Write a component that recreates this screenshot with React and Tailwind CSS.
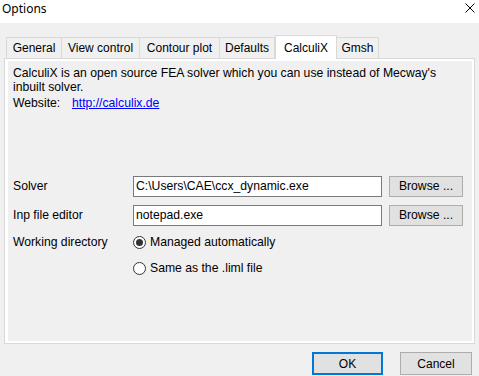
import React from "react";

function Tab({ label, w, selected, first }) {
  if (selected) {
    return (
      <div
        className="relative z-10 -mb-px flex h-[24px] items-start justify-center border border-b-0 border-[#d9d9d9] bg-white pt-[3px]"
        style={{ width: w }}
      >
        {label}
      </div>
    );
  }
  return (
    <div
      className={
        "flex h-[21px] items-center justify-center border-r border-t border-[#d9d9d9] bg-[#f0f0f0] " +
        (first ? "border-l" : "")
      }
      style={{ width: w }}
    >
      {label}
    </div>
  );
}

function Radio({ checked, label }) {
  return (
    <div className="flex h-[16px] items-center">
      <div className="flex h-[13px] w-[13px] items-center justify-center rounded-full border border-[#333333] bg-white">
        {checked && <div className="h-[7px] w-[7px] rounded-full bg-[#333333]" />}
      </div>
      <span className="ml-[4px]">{label}</span>
    </div>
  );
}

export default function App() {
  return (
    <div
      className="relative h-[376px] w-[479px] overflow-hidden bg-[#f0f0f0] text-[12px] text-black"
      style={{ fontFamily: '"Liberation Sans", Arial, sans-serif' }}
    >
      {/* Title bar */}
      <div className="flex h-[23px] items-center justify-between bg-white pl-[2px] pr-[3px]">
        <span
          className="pb-[5px] text-[12px]"
          style={{ fontFamily: '"Segoe UI", "Noto Sans", sans-serif' }}
        >
          Options
        </span>
        <svg width="10" height="10" viewBox="0 0 10 10" className="mb-[7px] mr-[1px]">
          <path d="M0.5 0.5 L9.5 9.5 M9.5 0.5 L0.5 9.5" stroke="#000" strokeWidth="1" fill="none" />
        </svg>
      </div>

      {/* Tab control */}
      <div className="ml-[4px] mt-[12px] w-[471px]">
        <div className="flex h-[23px] items-end pl-[2px]">
          <Tab label="General" w={56} first />
          <Tab label="View control" w={78} />
          <Tab label="Contour plot" w={80} />
          <Tab label="Defaults" w={55} />
          <Tab label="CalculiX" w={62} selected />
          <Tab label="Gmsh" w={42} />
        </div>
        <div className="h-[286px] border border-[#d9d9d9] bg-white pb-[2px] pl-[3px] pr-[2px] pt-[2px]">
          <div className="flex h-full flex-col bg-[#f0f0f0] pl-[5px] pt-[5px] text-[12.2px]">
            <p className="leading-[14px]">
              CalculiX is an open source FEA solver which you can use instead of Mecway's
              <br />
              inbuilt solver.
            </p>
            <div className="mt-[2px] flex leading-[14px]">
              <span className="w-[59px]">Website:</span>
              <span className="text-[#0000ff] underline">http://calculix.de</span>
            </div>

            <div className="mt-[66px] flex h-[21px] items-center">
              <span className="w-[120px]">Solver</span>
              <div className="flex h-[21px] w-[249px] items-center border border-[#7a7a7a] bg-white pl-[2px]">
                C:\Users\CAE\ccx_dynamic.exe
              </div>
              <div className="ml-[7px] flex h-[21px] w-[74px] items-center justify-center border border-[#adadad] bg-[#e1e1e1]">
                Browse ...
              </div>
            </div>

            <div className="mt-[8px] flex h-[21px] items-center">
              <span className="w-[120px]">Inp file editor</span>
              <div className="flex h-[21px] w-[249px] items-center border border-[#7a7a7a] bg-white pl-[2px]">
                notepad.exe
              </div>
              <div className="ml-[7px] flex h-[21px] w-[74px] items-center justify-center border border-[#adadad] bg-[#e1e1e1]">
                Browse ...
              </div>
            </div>

            <div className="mt-[7px] flex items-center">
              <span className="w-[120px]">Working directory</span>
              <Radio checked label="Managed automatically" />
            </div>
            <div className="ml-[120px] mt-[9px]">
              <Radio label="Same as the .liml file" />
            </div>
          </div>
        </div>
      </div>

      {/* Bottom buttons */}
      <div className="mt-[8px] flex justify-end pr-[7px]">
        <div className="flex h-[23px] w-[71px] items-center justify-center border-2 border-[#0078d7] bg-[#e1e1e1]">
          OK
        </div>
        <div className="ml-[17px] flex h-[23px] w-[72px] items-center justify-center border border-[#adadad] bg-[#e1e1e1]">
          Cancel
        </div>
      </div>
    </div>
  );
}
